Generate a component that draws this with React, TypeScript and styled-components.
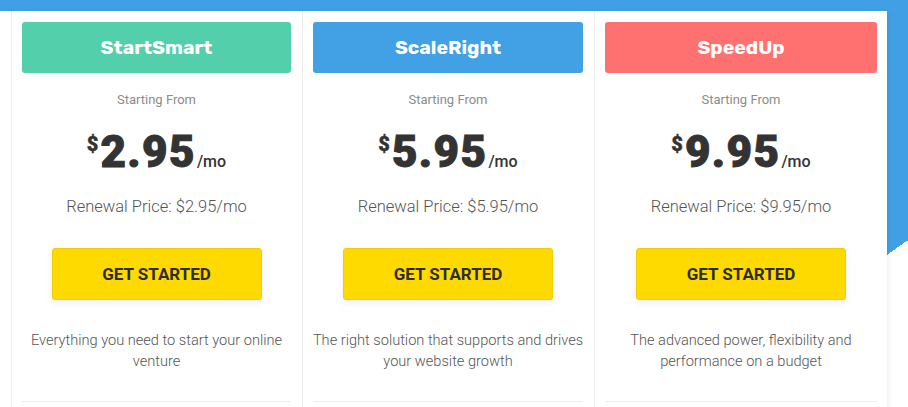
import React from "react";
import styled, { createGlobalStyle } from "styled-components";

const Global = createGlobalStyle`
  html, body { margin: 0; padding: 0; background: #ffffff; }
  body { font-family: Roboto, "Liberation Sans", sans-serif; }
  * { box-sizing: border-box; }
`;

const BLUE = "#41a0e5";

const Page = styled.div`
  width: 908px;
  height: 407px;
  overflow: hidden;
  background:
    linear-gradient(${BLUE}, ${BLUE}) left top / 100% 11px no-repeat,
    linear-gradient(${BLUE}, ${BLUE}) right top / 21px 241px no-repeat,
    linear-gradient(to bottom right, ${BLUE} 50%, transparent 50%) right 0 top 240px / 21px 15px no-repeat,
    #ffffff;
  padding-top: 11px;
`;

const Card = styled.div`
  width: 887px;
  height: 420px;
  background: #ffffff;
  border-radius: 0 4px 0 0;
  box-shadow: 2px 0 6px rgba(0, 0, 0, 0.06);
  padding-left: 11px;
  display: grid;
  grid-template-columns: 291px 292px 1fr;
`;

const Column = styled.div`
  border-left: 1px solid #ededed;
  padding: 11px 11px 0 10px;
  display: flex;
  flex-direction: column;
  align-items: center;
`;

const PlanTitle = styled.div<{ $color: string }>`
  width: 100%;
  height: 51px;
  border-radius: 3px;
  background: ${(p) => p.$color};
  color: #ffffff;
  font-family: Rubik, Roboto, "Liberation Sans", sans-serif;
  font-weight: 700;
  font-size: 19.5px;
  line-height: 51px;
  text-align: center;
`;

const Starting = styled.div`
  margin-top: 19px;
  font-size: 13px;
  line-height: 16px;
  color: #8c8c8c;
`;

const Price = styled.div`
  margin-top: 22px;
  display: flex;
  align-items: baseline;
  color: #333333;
  height: 44px;
`;

const Currency = styled.span`
  font-size: 20px;
  font-weight: 900;
  align-self: flex-start;
  margin-top: 2px;
  margin-right: 2px;
  -webkit-text-stroke: 0.4px #333333;
`;

const Amount = styled.span`
  font-size: 44px;
  font-weight: 900;
  line-height: 44px;
  letter-spacing: 1.4px;
  -webkit-text-stroke: 1px #333333;
`;

const Per = styled.span`
  font-size: 16px;
  font-weight: 500;
  margin-left: 1px;
`;

const Renewal = styled.div`
  margin-top: 23px;
  font-size: 16.5px;
  font-weight: 300;
  color: #555555;
  line-height: 20px;
`;

const CTA = styled.button`
  margin-top: 31px;
  width: 210px;
  height: 52px;
  border: 1px solid #f2cd00;
  border-radius: 3px;
  background: #ffda00;
  color: #2d2d2d;
  font-family: Roboto, "Liberation Sans", sans-serif;
  font-weight: 700;
  font-size: 17px;
  text-transform: uppercase;
  box-shadow: 0 3px 8px rgba(0, 0, 0, 0.07);
  cursor: pointer;
`;

const Desc = styled.p`
  margin: 30px 0 0;
  width: 272px;
  text-align: center;
  font-size: 14.6px;
  font-weight: 300;
  line-height: 21px;
  color: #555555;
`;

const Divider = styled.div`
  margin-top: 29px;
  width: 100%;
  height: 1px;
  background: #ededed;
`;

type Plan = { name: string; color: string; price: string; desc: string };

const plans: Plan[] = [
  { name: "StartSmart", color: "#53cfab", price: "2.95", desc: "Everything you need to start your online venture" },
  { name: "ScaleRight", color: "#42a0e5", price: "5.95", desc: "The right solution that supports and drives your website growth" },
  { name: "SpeedUp", color: "#ff7070", price: "9.95", desc: "The advanced power, flexibility and performance on a budget" },
];

export default function App() {
  return (
    <Page>
      <Global />
      <Card>
        {plans.map((p) => (
          <Column key={p.name}>
            <PlanTitle $color={p.color}>{p.name}</PlanTitle>
            <Starting>Starting From</Starting>
            <Price>
              <Currency>$</Currency>
              <Amount>{p.price}</Amount>
              <Per>/mo</Per>
            </Price>
            <Renewal>Renewal Price: ${p.price}/mo</Renewal>
            <CTA>Get Started</CTA>
            <Desc>{p.desc}</Desc>
            <Divider />
          </Column>
        ))}
      </Card>
    </Page>
  );
}
